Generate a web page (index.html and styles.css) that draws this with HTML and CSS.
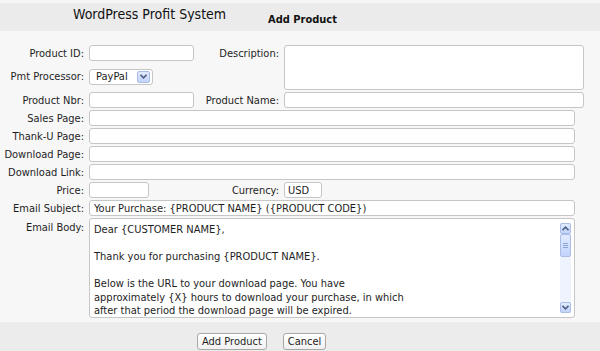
FILE: index.html
```html
<!DOCTYPE html>
<html lang="en">

<head>
    <meta charset="UTF-8">
    <title>Add Product</title>
    <link rel="stylesheet" href="styles.css">
</head>

<body>
    <div class="page">
        <div class="header">
            <span class="title">WordPress Profit System</span>
            <span class="subtitle">Add Product</span>
        </div>

        <form class="form">
            <label class="lbl">Product ID:</label>
            <input class="field short" type="text">
            <label class="lbl">Description:</label>
            <textarea class="field desc"></textarea>

            <label class="lbl">Pmt Processor:</label>
            <div class="select">
                <span class="select-text">PayPal</span>
                <span class="xp-btn select-btn">
                    <svg width="7" height="5" viewBox="0 0 7 5"><path d="M0.5 0.8 L3.5 3.8 L6.5 0.8" fill="none" stroke="#4d6185" stroke-width="1.6"/></svg>
                </span>
            </div>

            <label class="lbl">Product Nbr:</label>
            <input class="field short" type="text">
            <label class="lbl">Product Name:</label>
            <input class="field right" type="text">

            <label class="lbl">Sales Page:</label>
            <input class="field wide" type="text">

            <label class="lbl">Thank-U Page:</label>
            <input class="field wide" type="text">

            <label class="lbl">Download Page:</label>
            <input class="field wide" type="text">

            <label class="lbl">Download Link:</label>
            <input class="field wide" type="text">

            <label class="lbl">Price:</label>
            <input class="field price" type="text">
            <label class="lbl">Currency:</label>
            <input class="field currency" type="text" value="USD">

            <label class="lbl">Email Subject:</label>
            <input class="field wide" type="text" value="Your Purchase: {PRODUCT NAME} ({PRODUCT CODE})">

            <label class="lbl top">Email Body:</label>
            <div class="field wide mailbody">
                <div class="mailtext">
                    Dear {CUSTOMER NAME},<br><br>
                    Thank you for purchasing {PRODUCT NAME}.<br><br>
                    Below is the URL to your download page. You have<br>
                    approximately {X} hours to download your purchase, in which<br>
                    after that period the download page will be expired.
                </div>
                <div class="scroll">
                    <span class="xp-btn arrow">
                        <svg width="7" height="5" viewBox="0 0 7 5"><path d="M0.5 4.2 L3.5 1.2 L6.5 4.2" fill="none" stroke="#4d6185" stroke-width="1.6"/></svg>
                    </span>
                    <span class="xp-btn thumb">
                        <svg width="5" height="5" viewBox="0 0 5 5"><path d="M0 0.5 H5 M0 2.5 H5 M0 4.5 H5" stroke="#8ea6d6" stroke-width="1"/></svg>
                    </span>
                    <span class="track"></span>
                    <span class="xp-btn arrow">
                        <svg width="7" height="5" viewBox="0 0 7 5"><path d="M0.5 0.8 L3.5 3.8 L6.5 0.8" fill="none" stroke="#4d6185" stroke-width="1.6"/></svg>
                    </span>
                </div>
            </div>
        </form>

        <div class="footer">
            <button class="button" type="button">Add Product</button>
            <button class="button" type="button">Cancel</button>
        </div>
    </div>
</body>

</html>
```

FILE: styles.css
```css
body {
    margin: 0;
    background: #f7f7f7;
    font-family: "DejaVu Sans Condensed", "DejaVu Sans", sans-serif;
    font-stretch: semi-condensed;
    font-size: 11px;
    color: #1e1e1e;
}

.page {
    width: 600px;
    height: 351px;
    display: flex;
    flex-direction: column;
    overflow: hidden;
}

.header {
    height: 28px;
    border-top: 3px solid #f6f6f6;
    background: #ebebeb;
    display: flex;
    align-items: center;
}

.title {
    margin-left: 73px;
    font-size: 14px;
    color: #111;
    width: 195px;
    padding-bottom: 6px;
}

.subtitle {
    font-weight: bold;
    color: #111;
    padding-top: 4px;
}

.form {
    margin: 0;
    padding: 14px 0 4px;
    display: grid;
    grid-template-columns: 89px 105px 90px 300px;
    grid-template-rows: 16px 27px repeat(7, 16px) 100px;
    row-gap: 2px;
}

.lbl {
    align-self: center;
    text-align: right;
    padding-right: 5px;
    white-space: nowrap;
}

.lbl.top {
    align-self: start;
    padding-top: 3px;
}

.field {
    box-sizing: border-box;
    height: 16px;
    margin: 0;
    padding: 0 3px;
    border: 1px solid #c6c6c6;
    border-radius: 3px;
    background: #fff;
    font-family: inherit;
    font-stretch: inherit;
    font-size: 11px;
    color: #1e1e1e;
    outline: none;
}

.short {
    width: 105px;
}

.right {
    width: 300px;
}

.desc {
    grid-row: span 2;
    width: 300px;
    height: 45px;
    resize: none;
}

.wide {
    grid-column: 2 / 5;
    width: 486px;
    padding-left: 4px;
}

.price {
    width: 60px;
}

.currency {
    width: 38px;
}

.select {
    grid-column: 2 / 4;
    align-self: center;
    justify-self: start;
    box-sizing: border-box;
    width: 64px;
    height: 16px;
    border: 1px solid #c6c6c6;
    border-radius: 3px;
    background: #fff;
    display: flex;
    align-items: center;
    padding: 0 2px 0 6px;
}

.select-text {
    flex: 1;
}

.xp-btn {
    box-sizing: border-box;
    display: flex;
    align-items: center;
    justify-content: center;
    border: 1px solid #a9bde6;
    border-radius: 2px;
    background: linear-gradient(to bottom, #e2ebfe, #c2d3fb);
}

.select-btn {
    width: 13px;
    height: 12px;
}

.mailbody {
    height: 100px;
    padding: 0;
    display: flex;
}

.mailtext {
    flex: 1;
    padding: 4px 4px;
    line-height: 13.5px;
}

.scroll {
    width: 11px;
    margin: 4px 3px 4px 0;
    display: flex;
    flex-direction: column;
    background: #eef3fd;
}

.arrow {
    height: 11px;
}

.thumb {
    height: 23px;
}

.track {
    flex: 1;
}

.footer {
    flex: 1;
    background: #ececec;
    display: flex;
    align-items: flex-start;
    gap: 16px;
    padding: 11px 0 0 197px;
}

.button {
    height: 17px;
    padding: 0 4px;
    border: 1px solid #a8a8a8;
    border-radius: 3px;
    background: linear-gradient(to bottom, #ffffff, #f1f1f1);
    font-family: inherit;
    font-stretch: inherit;
    font-size: 11px;
    color: #1e1e1e;
    line-height: 15px;
}
```
